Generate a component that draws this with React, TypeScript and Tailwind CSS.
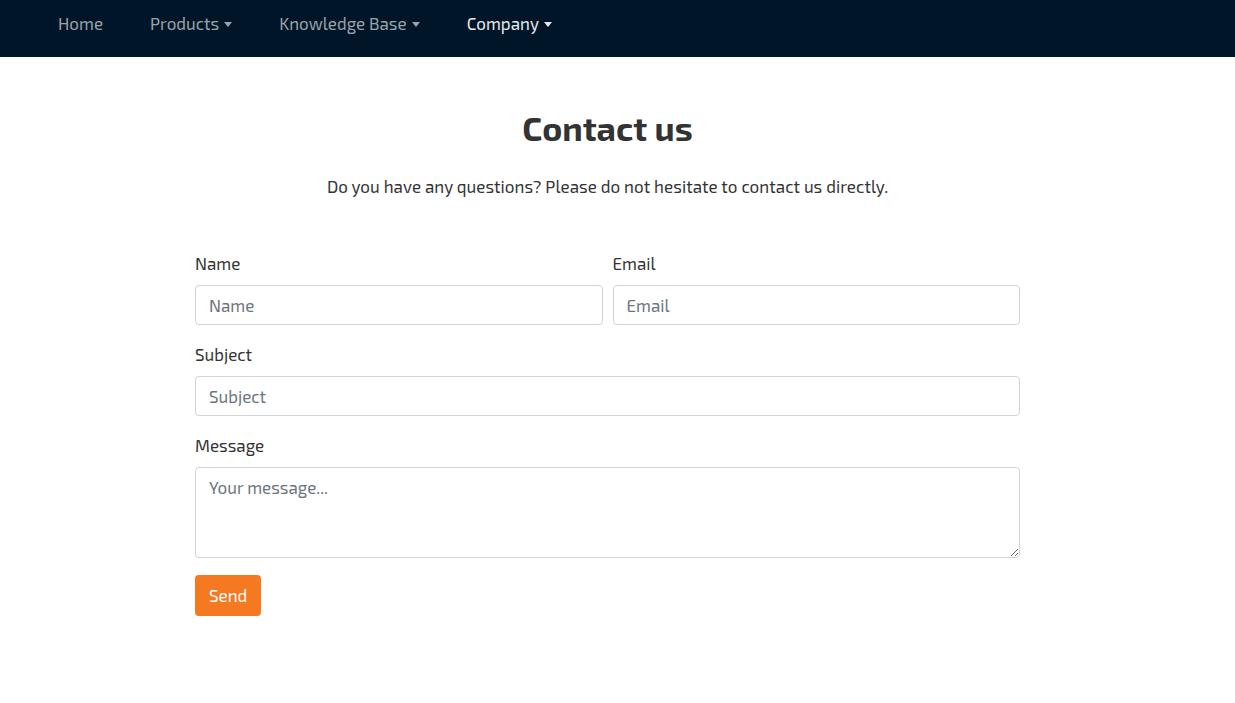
import React from "react";

function Caret({ className }: { className?: string }) {
  return (
    <svg width="8" height="5" viewBox="0 0 8 5" className={className} fill="currentColor">
      <path d="M0 0 L8 0 L4 5 Z" />
    </svg>
  );
}

const inputCls =
  "h-[40px] border border-[#ced4da] rounded-[4px] px-[13px] text-[17px] text-[#495057] placeholder:text-[#6c757d] outline-none bg-white";

export default function App() {
  const font = { fontFamily: '"Exo 2", Roboto, "Liberation Sans", sans-serif' };
  return (
    <div className="min-h-[703px] bg-white text-[#333]" style={font}>
      <nav className="h-[57px] bg-[#001628] flex items-start pl-[58px] gap-[47px] text-[17px] leading-[24px]">
        <a className="mt-[11px] text-[#9aa3ab]">Home</a>
        <a className="mt-[11px] text-[#9aa3ab] flex items-center gap-[5px]">
          Products <Caret className="mt-[2px]" />
        </a>
        <a className="mt-[11px] text-[#9aa3ab] flex items-center gap-[5px]">
          Knowledge Base <Caret className="mt-[2px]" />
        </a>
        <a className="mt-[11px] text-[#e6ebef] flex items-center gap-[5px]">
          Company <Caret className="mt-[2px]" />
        </a>
      </nav>
      <main className="flex flex-col items-center pr-[20px]">
        <h1 className="mt-[51px] text-[34px] font-bold leading-[40px] text-[#333]">Contact us</h1>
        <p className="mt-[26px] text-[17px] leading-[24px] text-[#333] tracking-[0.05px]">
          Do you have any questions? Please do not hesitate to contact us directly.
        </p>
        <form className="w-[825px] mt-[53px] flex flex-col text-[17px]">
          <div className="grid grid-cols-2 gap-[10px]">
            <div className="flex flex-col">
              <label className="leading-[24px] mb-[10px]">Name</label>
              <input placeholder="Name" className={inputCls} />
            </div>
            <div className="flex flex-col">
              <label className="leading-[24px] mb-[10px]">Email</label>
              <input placeholder="Email" className={inputCls} />
            </div>
          </div>
          <label className="mt-[17px] leading-[24px] mb-[10px]">Subject</label>
          <input placeholder="Subject" className={inputCls} />
          <label className="mt-[17px] leading-[24px] mb-[10px]">Message</label>
          <textarea
            placeholder="Your message..."
            className="h-[91px] border border-[#ced4da] rounded-[4px] px-[13px] py-[7px] text-[17px] leading-[24px] placeholder:text-[#6c757d] outline-none"
          />
          <div className="mt-[17px]">
            <button
              type="button"
              className="h-[41px] px-[14px] bg-[#f47920] text-white text-[17px] rounded-[4px]"
            >
              Send
            </button>
          </div>
        </form>
      </main>
    </div>
  );
}
